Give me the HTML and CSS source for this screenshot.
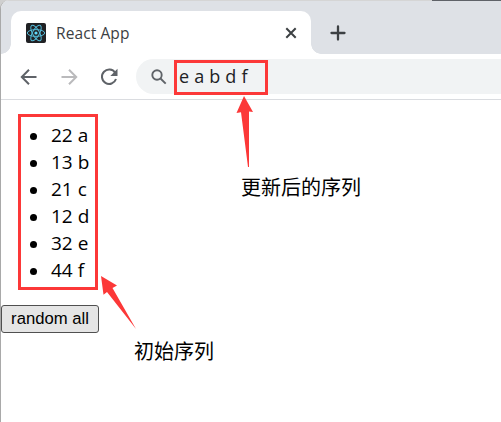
FILE: index.html
```html
<!DOCTYPE html>
<html lang="zh-CN">
<head>
<meta charset="utf-8">
<title>React App</title>
<link rel="stylesheet" href="styles.css">
</head>
<body>
<div class="window">
  <header class="tabstrip">
    <div class="tab">
      <svg class="favicon" viewBox="0 0 20 20"><rect width="20" height="20" rx="2" fill="#202124"/><g fill="none" stroke="#53b9d6" stroke-width="1"><ellipse cx="10" cy="10" rx="8.7" ry="3.4"/><ellipse cx="10" cy="10" rx="8.7" ry="3.4" transform="rotate(60 10 10)"/><ellipse cx="10" cy="10" rx="8.7" ry="3.4" transform="rotate(120 10 10)"/></g><circle cx="10" cy="10" r="1.6" fill="#61dafb"/></svg>
      <span class="tab-title">React App</span>
      <svg class="close" viewBox="0 0 12 12"><path d="M1.300 1.300l9.400 9.400M10.700 1.300l-9.400 9.400"/></svg>
    </div>
    <svg class="plus" viewBox="0 0 16 16"><path d="M8 1.500v13M1.500 8h13"/></svg>
  </header>
  <nav class="toolbar">
    <svg class="nav-icon" viewBox="0 0 18 18"><path d="M16.500 9H2M9 1.800L1.800 9 9 16.200"/></svg>
    <svg class="nav-icon disabled" viewBox="0 0 18 18"><path d="M1.500 9H16M9 1.800L16.200 9 9 16.200"/></svg>
    <svg class="nav-icon" viewBox="0 0 18 18"><path d="M15.200 4.800A7.200 7.200 0 1 0 16 11"/><path class="solid" d="M17.500 .8V8h-7.200z"/></svg>
    <div class="omnibox">
      <svg class="search" viewBox="0 0 16 16"><circle cx="6" cy="6" r="4.700"/><path d="M9.500 9.500l5.200 5.200"/></svg>
      <span class="query">e a b d f</span>
    </div>
  </nav>
  <main class="page">
    <ul class="items">
      <li>22 a</li>
      <li>13 b</li>
      <li>21 c</li>
      <li>12 d</li>
      <li>32 e</li>
      <li>44 f</li>
    </ul>
    <button class="random" type="button">random all</button>
  </main>
</div>
<svg class="marks" viewBox="0 0 501 422">
  <rect x="175.500" y="61.500" width="91" height="32"/>
  <rect x="19.500" y="115.500" width="77" height="173"/>
  <path d="M244 96L253 112l-4-.5V167h-1L241 112.300l-4.500.7z"/>
  <path d="M101 276l16 9.500-4.500 2.500L136 329l-29-37-3.500 2.700z"/>
</svg>
<span class="note note-updated">更新后的序列</span>
<span class="note note-initial">初始序列</span>
</body>
</html>
```

FILE: styles.css
```css
* { box-sizing: border-box; }
html { background: #cfcfcf; }
body {
  margin: 0;
  width: 501px;
  height: 422px;
  overflow: hidden;
  position: relative;
  font-family: "Open Sans", "Noto Sans CJK SC", sans-serif;
  color: #000;
}
.window {
  height: 422px;
  background: #fff;
  border-left: 1px solid #a9a9a9;
  border-top-left-radius: 9px;
  overflow: hidden;
}
.tabstrip {
  height: 54px;
  padding: 11px 0 0 10px;
  display: flex;
  background: linear-gradient(90deg, #d5d5d5 431px, #5f6268 431px) 0 0 / 100% 1px no-repeat #dee1e6;
}
.tab {
  position: relative;
  width: 300px;
  height: 43px;
  padding: 0 14px 0 15px;
  display: flex;
  align-items: center;
  background: #fff;
  border-radius: 10px 10px 0 0;
}
.tab::before, .tab::after {
  content: "";
  position: absolute;
  bottom: 0;
  width: 10px;
  height: 10px;
}
.tab::before { left: -10px; background: radial-gradient(circle at 0 0, transparent 9.5px, #fff 10px); }
.tab::after { right: -10px; background: radial-gradient(circle at 100% 0, transparent 9.5px, #fff 10px); }
.favicon { width: 20px; height: 20px; }
.tab-title {
  margin-left: 10px;
  flex: 1;
  font-size: 15.5px;
  letter-spacing: 0.1px;
  line-height: 20px;
  color: #3c4043;
}
.close { width: 12px; height: 12px; fill: none; stroke: #3c4043; stroke-width: 2; }
.plus { width: 16px; height: 16px; margin: 14px 0 0 19px; fill: none; stroke: #3c4043; stroke-width: 2.3; stroke-linecap: round; }
.toolbar {
  height: 46px;
  padding-left: 19px;
  display: flex;
  align-items: center;
  border-bottom: 1px solid #dadce0;
}
.nav-icon { width: 18px; height: 18px; margin-right: 22px; fill: none; stroke: #5f6368; stroke-width: 2; }
.nav-icon .solid { fill: #5f6368; stroke: none; }
.disabled { stroke: #bababc; }
.omnibox {
  flex: 1;
  height: 35px;
  margin-left: -4px;
  padding-left: 15px;
  display: flex;
  align-items: center;
  background: #f1f3f4;
  border-radius: 18px 0 0 18px;
}
.search { width: 16px; height: 16px; fill: none; stroke: #5f6368; stroke-width: 1.9; }
.query { margin: -2px 0 0 12px; font-size: 18px; line-height: 24px; letter-spacing: 0.2px; color: #202124; }
.page { padding-top: 22px; }
.items {
  margin: 0 0 21px;
  padding-left: 50px;
  list-style: none;
  font-size: 19px;
  line-height: 27px;
}
.items li { display: flex; align-items: center; }
.items li::before {
  content: "";
  width: 7px;
  height: 7px;
  margin: 1px 14px 0 -21px;
  border-radius: 50%;
  background: #000;
}
.random {
  display: block;
  width: 98px;
  height: 28px;
  padding: 0;
  border: 1px solid #505050;
  border-radius: 3px;
  background: #e5e5e5;
  color: #000;
  font: 16.67px/24px "Liberation Sans", sans-serif;
}
.marks { position: absolute; left: 0; top: 0; width: 501px; height: 422px; }
.marks rect { fill: none; stroke: #fc3838; stroke-width: 3; }
.marks path { fill: #fc3838; }
.note {
  position: absolute;
  font: 20px/28px "Noto Sans CJK SC", sans-serif;
  white-space: nowrap;
}
.note-updated { left: 241px; top: 173px; }
.note-initial { left: 134px; top: 337px; }
```
